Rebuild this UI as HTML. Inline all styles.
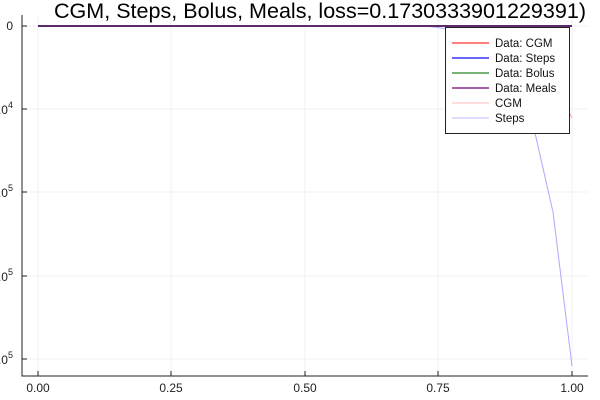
<!DOCTYPE html>
<html><head><style>body{margin:0;background:#fff}svg{display:block}text{font-family:"Liberation Sans",sans-serif}</style></head>
<body>
<svg width="600" height="400" viewBox="0 0 600 400">
<rect width="600" height="400" fill="#fff"/>
<g stroke="#f0f0f0" stroke-width="1">
<line x1="38" y1="15" x2="38" y2="376"/><line x1="171" y1="15" x2="171" y2="376"/><line x1="305" y1="15" x2="305" y2="376"/><line x1="438" y1="15" x2="438" y2="376"/><line x1="572" y1="15" x2="572" y2="376"/>
<line x1="22" y1="26" x2="588" y2="26"/><line x1="22" y1="109" x2="588" y2="109"/><line x1="22" y1="192" x2="588" y2="192"/><line x1="22" y1="276" x2="588" y2="276"/><line x1="22" y1="359" x2="588" y2="359"/>
</g>
<path d="M22 15V376H588" fill="none" stroke="#222" stroke-width="1"/>
<g stroke="#222"><line x1="22" y1="26" x2="27" y2="26"/><line x1="22" y1="109" x2="27" y2="109"/><line x1="22" y1="192" x2="27" y2="192"/><line x1="22" y1="276" x2="27" y2="276"/><line x1="22" y1="359" x2="27" y2="359"/>
<line x1="38" y1="376" x2="38" y2="371"/><line x1="171" y1="376" x2="171" y2="371"/><line x1="305" y1="376" x2="305" y2="371"/><line x1="438" y1="376" x2="438" y2="371"/><line x1="572" y1="376" x2="572" y2="371"/></g>
<path d="M38 26L420 26 C480 28 520 60 535 133 L553 212 L572 366" fill="none" stroke="#aaaaff" stroke-width="1"/>
<path d="M560 26 L568 110 L572 118" fill="none" stroke="#ffaaaa" stroke-width="1"/>
<line x1="38" y1="26" x2="572" y2="26" stroke="#5e2a6e" stroke-width="2"/>
<rect x="445.5" y="27.5" width="124" height="106" fill="#fff" stroke="#222"/>
<g stroke-width="1.5"><line x1="452" y1="43" x2="489" y2="43" stroke="#ff5555"/><line x1="452" y1="58" x2="489" y2="58" stroke="#6666ff" stroke-width="2"/><line x1="452" y1="73" x2="489" y2="73" stroke="#4a9a4a"/><line x1="452" y1="88" x2="489" y2="88" stroke="#8a2a8a"/><line x1="452" y1="103" x2="489" y2="103" stroke="#ffbbbb" stroke-width="1"/><line x1="452" y1="118" x2="489" y2="118" stroke="#bbbbff" stroke-width="1"/></g>
<g font-size="11.5" fill="#111"><text x="495" y="47">Data: CGM</text><text x="495" y="62">Data: Steps</text><text x="495" y="77">Data: Bolus</text><text x="495" y="92">Data: Meals</text><text x="495" y="107">CGM</text><text x="495" y="122">Steps</text></g>
<text x="320" y="18" font-size="21" text-anchor="middle" fill="#000" textLength="532" lengthAdjust="spacingAndGlyphs">CGM, Steps, Bolus, Meals, loss=0.1730333901229391)</text>
<g font-size="12" fill="#222" text-anchor="middle"><text x="38" y="392">0.00</text><text x="171" y="392">0.25</text><text x="305" y="392">0.50</text><text x="438" y="392">0.75</text><text x="572" y="392">1.00</text></g>
<g font-size="12" fill="#222" text-anchor="end"><text x="13" y="30">0</text><text x="13" y="114">.0<tspan dy="-6" font-size="9">4</tspan></text><text x="13" y="197">.0<tspan dy="-6" font-size="9">5</tspan></text><text x="13" y="281">.0<tspan dy="-6" font-size="9">5</tspan></text><text x="13" y="364">.0<tspan dy="-6" font-size="9">5</tspan></text></g>
</svg>
</body></html>
